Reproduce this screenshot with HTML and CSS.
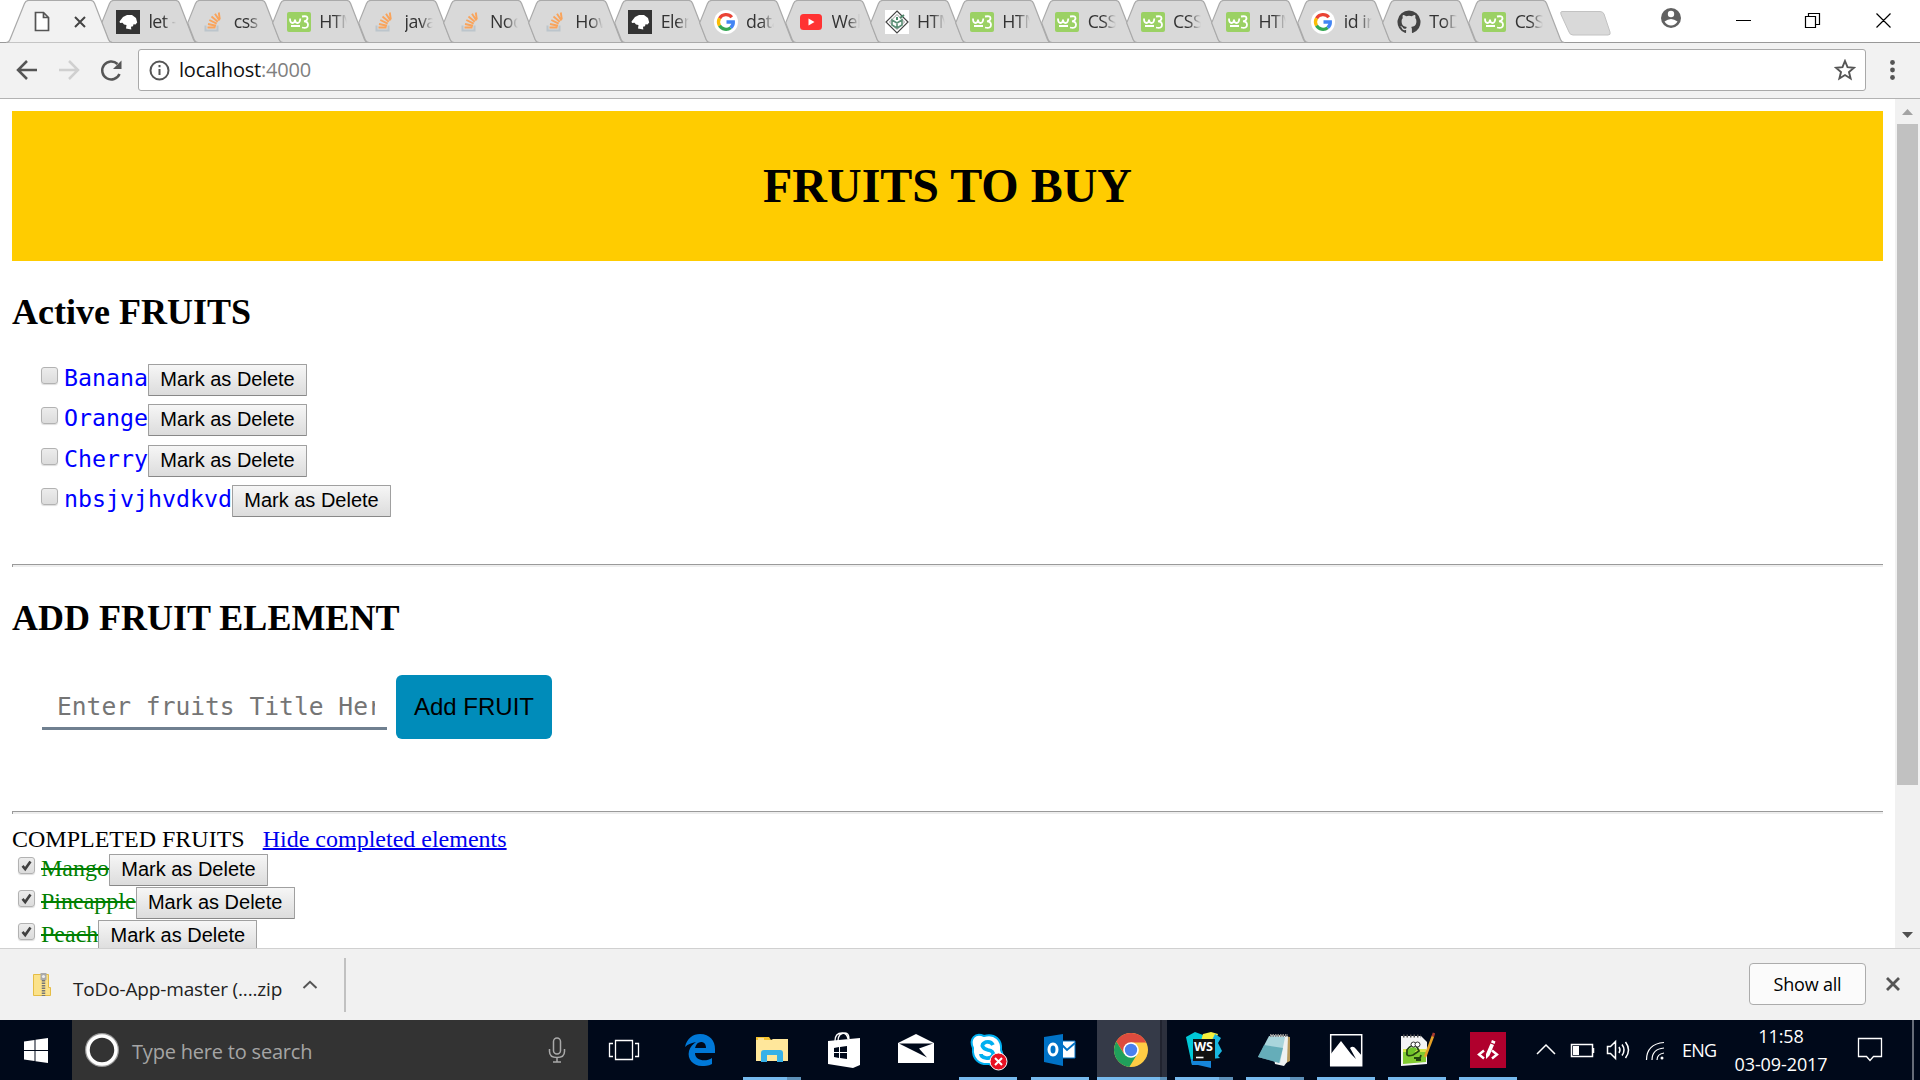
FILE: index.html
```html
<!DOCTYPE html>
<html lang="en">
<head>
<meta charset="utf-8">
<title>localhost:4000</title>
<link rel="stylesheet" href="styles.css">
</head>
<body>
<svg class="defs" width="0" height="0">
  <symbol id="shape-active" viewBox="0 0 116 43"><path d="M6 42.500Q9 42.500 10 39.500L24.500 3.500Q25.800 .5 28.500 .5H91Q93.500 .5 94.600 3.500L108.500 39.500Q109.600 42.500 112.500 42.500"/></symbol>
  <symbol id="shape" viewBox="0 0 116 43"><path d="M27.100 42.500Q24.200 42.500 23.100 39.500L16.700 22.900L24.500 3.500Q25.800 .5 28.500 .5H91Q93.500 .5 94.600 3.500L108.500 39.500Q109.600 42.500 112.500 42.500Z"/></symbol>
  <symbol id="lion" viewBox="0 0 24 24"><path fill="#333" d="M0 0h24v24H0z"/><path fill="#fff" d="M3.500 11.500l3.500-4.500 4-2h5l4 3 1.200 4.500-1.700 2-2-.3-.5 2-2 .6.3 2.700-5.300-1 .5-3.500-2.500-.5-1.500-1.800-2.500.3z"/></symbol>
  <symbol id="so" viewBox="0 0 24 24"><path d="M4.500 15.500v5h12v-5" fill="none" stroke="#bcc5cc" stroke-width="2"/><path d="M6.500 17.500h8M7 14l8 1.700M8.300 10l7.400 3.600M10.500 6.500l6.300 5.200M14 3.800l4.400 6.700M17.800 2.500l1 7" stroke="#f9a45c" stroke-width="1.900"/></symbol>
  <symbol id="w3" viewBox="0 0 24 24"><rect y="2" width="24" height="20" rx="2" fill="#9bd164"/><path d="M3 8.500q0 4.500 2.500 4.500t2.500-3.500q0 3.500 2.500 3.500t2.800-4.500M15 6.500q5.500-1 5.500 1.800 0 2.500-3.500 3 4 0 4 3.400 0 4.300-6 2.800M4 16h9" fill="none" stroke="#fff" stroke-width="1.800"/></symbol>
  <symbol id="google" viewBox="0 0 24 24"><circle cx="12" cy="12" r="12" fill="#fff"/><g fill="none" stroke-width="3.300"><path d="M17.800 7.300A7.600 7.600 0 0 0 5.500 8.300" stroke="#ea4335"/><path d="M5.500 8.300a7.600 7.600 0 0 0 0 7.400" stroke="#fbbc05"/><path d="M5.500 15.700a7.600 7.600 0 0 0 11.200 2" stroke="#34a853"/><path d="M16.700 17.700q2.800-2.500 2.600-5.700H12.500" stroke="#4285f4"/></g></symbol>
  <symbol id="yt" viewBox="0 0 24 24"><rect x="1" y="4" width="22" height="16" rx="3.500" fill="#f33"/><path fill="#fff" d="M9.500 8.500l6 3.500-6 3.500z"/></symbol>
  <symbol id="diamond" viewBox="0 0 24 24"><path fill="#fff" d="M0 0h24v24H0z"/><path d="M12 1l11 11-11 11L1 12z" fill="none" stroke="#444" stroke-width="1.200"/><path d="M12 4.500l7.500 7.500-7.500 7.500L4.500 12z" fill="none" stroke="#999" stroke-width="1"/><path d="M7 10l5 3 5-3v5l-5 3-5-3zM12 13v5" fill="none" stroke="#5d8f76" stroke-width="1.600"/><path d="M12 7v3M15 8l4-3" stroke="#4f8a6c" stroke-width="2"/></symbol>
  <symbol id="github" viewBox="0 0 24 24"><path fill="#444" d="M12 .5a11.500 11.500 0 0 0-3.700 22.400c.6.100.8-.2.800-.6v-2.200c-3.200.7-3.900-1.400-3.900-1.400-.5-1.300-1.300-1.700-1.300-1.700-1-.7.1-.7.100-.7 1.200.1 1.800 1.200 1.800 1.200 1 1.800 2.700 1.300 3.400 1 .1-.8.400-1.300.7-1.600-2.600-.3-5.300-1.300-5.300-5.700 0-1.300.5-2.300 1.200-3.100-.1-.3-.5-1.500.1-3.100 0 0 1-.3 3.200 1.200a11 11 0 0 1 5.800 0c2.200-1.500 3.200-1.200 3.200-1.200.6 1.600.2 2.800.1 3.100.8.800 1.200 1.800 1.200 3.100 0 4.400-2.700 5.400-5.300 5.700.4.400.8 1.100.8 2.200v3.200c0 .4.200.7.800.6A11.500 11.500 0 0 0 12 .5z"/></symbol>
</svg>

<header class="browser-top">
  <nav class="tabs">
    <div class="tab active"><svg class="shape"><use href="#shape-active"/></svg><svg class="page-icon" viewBox="0 0 16 21"><path d="M1.500 1.500h8l5 5v13h-13zM9.500 1.500v5h5"/></svg><svg class="tab-close" viewBox="0 0 12 12"><path d="M1 1l10 10M11 1L1 11"/></svg></div>
    <div class="tab"><svg class="shape"><use href="#shape"/></svg><svg class="fav"><use href="#lion"/></svg><span>let -</span></div>
    <div class="tab"><svg class="shape"><use href="#shape"/></svg><svg class="fav"><use href="#so"/></svg><span>css</span></div>
    <div class="tab"><svg class="shape"><use href="#shape"/></svg><svg class="fav"><use href="#w3"/></svg><span>HTML</span></div>
    <div class="tab"><svg class="shape"><use href="#shape"/></svg><svg class="fav"><use href="#so"/></svg><span>java</span></div>
    <div class="tab"><svg class="shape"><use href="#shape"/></svg><svg class="fav"><use href="#so"/></svg><span>Node</span></div>
    <div class="tab"><svg class="shape"><use href="#shape"/></svg><svg class="fav"><use href="#so"/></svg><span>How</span></div>
    <div class="tab"><svg class="shape"><use href="#shape"/></svg><svg class="fav"><use href="#lion"/></svg><span>Elem</span></div>
    <div class="tab"><svg class="shape"><use href="#shape"/></svg><svg class="fav"><use href="#google"/></svg><span>data</span></div>
    <div class="tab"><svg class="shape"><use href="#shape"/></svg><svg class="fav"><use href="#yt"/></svg><span>Web</span></div>
    <div class="tab"><svg class="shape"><use href="#shape"/></svg><svg class="fav"><use href="#diamond"/></svg><span>HTML</span></div>
    <div class="tab"><svg class="shape"><use href="#shape"/></svg><svg class="fav"><use href="#w3"/></svg><span>HTML</span></div>
    <div class="tab"><svg class="shape"><use href="#shape"/></svg><svg class="fav"><use href="#w3"/></svg><span>CSS</span></div>
    <div class="tab"><svg class="shape"><use href="#shape"/></svg><svg class="fav"><use href="#w3"/></svg><span>CSS</span></div>
    <div class="tab"><svg class="shape"><use href="#shape"/></svg><svg class="fav"><use href="#w3"/></svg><span>HTML</span></div>
    <div class="tab"><svg class="shape"><use href="#shape"/></svg><svg class="fav"><use href="#google"/></svg><span>id in</span></div>
    <div class="tab"><svg class="shape"><use href="#shape"/></svg><svg class="fav"><use href="#github"/></svg><span>ToDo</span></div>
    <div class="tab"><svg class="shape"><use href="#shape"/></svg><svg class="fav"><use href="#w3"/></svg><span>CSS</span></div>
    <svg class="window-tools" width="383" height="43" viewBox="1537 0 383 43">
      <path d="M1562 11.500h38q3 0 4 2.500l6 18q1 3-2 3h-35q-3 0-4-3l-8-17.500q-1-3 1-3z" fill="#d9d9d9" stroke="#c2c2c2"/>
      <circle cx="1671" cy="18" r="10" fill="#616161"/><circle cx="1671" cy="14" r="3.200" fill="#fff"/><path d="M1664.500 21.500q6.500-5 13 0-2.500 4-6.500 4t-6.500-4z" fill="#fff"/>
      <g fill="none" stroke="#000" stroke-width="1.200"><path d="M1736 20.500h15M1805.500 16.500h10v11h-10zM1808.500 16v-2.500h11v11h-3.500M1876.500 13.500l14 14M1890.500 13.500l-14 14"/></g>
    </svg>
  </nav>
  <div class="toolbar">
    <svg width="138" height="55" viewBox="0 43 138 55" fill="none" stroke-width="2.500">
      <path d="M37 70H19M27 61l-9 9 9 9" stroke="#555"/><path d="M59 70h18M69 61l9 9-9 9" stroke="#d0d0d0"/>
      <path d="M119.500 74A9 9 0 1 1 117.500 64" stroke="#555"/><path d="M121.500 60.500v8.500h-8.500z" fill="#555"/>
    </svg>
    <div class="address">
      <svg width="40" height="40" viewBox="0 0 40 40"><circle cx="20.500" cy="20.500" r="9" fill="none" stroke="#555" stroke-width="2"/><path d="M20.500 19v6M20.500 15v2.200" stroke="#555" stroke-width="2"/></svg>
      <span class="url">localhost<i>:4000</i></span>
      <svg class="star" width="22" height="22" viewBox="0 0 22 22"><path d="M11 2l2.500 6.200 6.500.5-5 4.300 1.600 6.500L11 16l-5.600 3.500L7 13 2 8.700l6.500-.5z" fill="none" stroke="#555" stroke-width="1.900"/></svg>
    </div>
    <svg width="54" height="55" viewBox="0 0 54 55" fill="#555"><circle cx="26.500" cy="19.500" r="2.400"/><circle cx="26.500" cy="27" r="2.400"/><circle cx="26.500" cy="34.500" r="2.400"/></svg>
  </div>
</header>

<main class="viewport">
  <div class="page">
    <div class="banner"><h1>FRUITS TO BUY</h1></div>
    <h2>Active FRUITS</h2>
    <ul class="active-list">
      <li><i class="box"></i><span>Banana</span><button>Mark as Delete</button></li>
      <li><i class="box"></i><span>Orange</span><button>Mark as Delete</button></li>
      <li><i class="box"></i><span>Cherry</span><button>Mark as Delete</button></li>
      <li><i class="box"></i><span>nbsjvjhvdkvd</span><button>Mark as Delete</button></li>
    </ul>
    <hr>
    <h2 class="add-title">ADD FRUIT ELEMENT</h2>
    <form class="add-form"><input type="text" placeholder="Enter fruits Title Here"><button type="button" class="add">Add FRUIT</button></form>
    <hr>
    <p class="completed">COMPLETED FRUITS <a href="#">Hide completed elements</a></p>
    <ul class="done-list">
      <li><i class="box"><svg viewBox="0 0 17 17"><path d="M4 9l3 3.500L13 4"/></svg></i><span>Mango</span><button>Mark as Delete</button></li>
      <li><i class="box"><svg viewBox="0 0 17 17"><path d="M4 9l3 3.500L13 4"/></svg></i><span>Pineapple</span><button>Mark as Delete</button></li>
      <li><i class="box"><svg viewBox="0 0 17 17"><path d="M4 9l3 3.500L13 4"/></svg></i><span>Peach</span><button>Mark as Delete</button></li>
    </ul>
  </div>
  <div class="scrollbar">
    <svg width="25" height="25" viewBox="0 0 25 25"><path d="M7 16l5.500-6 5.500 6z" fill="#a3a3a3"/></svg>
    <div class="thumb"></div>
    <svg width="25" height="25" viewBox="0 0 25 25"><path d="M7 9l5.500 6L18 9z" fill="#505050"/></svg>
  </div>
</main>

<section class="downloads">
  <svg width="19" height="24" viewBox="0 0 19 24"><path d="M.5 1.500h15v13l2 0v8H.5z" fill="#fbe28a" stroke="#e5bd45"/><path d="M7.500 0h6v7h-6z" fill="#aaa"/><circle cx="10.500" cy="3.500" r="1.600" fill="#eee"/><path d="M10.500 7v16" stroke="#777" stroke-width="3.500" stroke-dasharray="1.500 1"/></svg>
  <span class="file">ToDo-App-master (....zip</span>
  <svg width="16" height="10" viewBox="0 0 16 10"><path d="M1.500 8L8 1.800 14.500 8" fill="none" stroke="#555" stroke-width="2"/></svg>
  <i class="rule"></i>
  <button class="show-all">Show all</button>
  <svg width="16" height="16" viewBox="0 0 16 16"><path d="M2 1l12 12M14 1L2 13" stroke="#555" stroke-width="2.800"/></svg>
</section>

<footer class="taskbar">
  <div class="start"><svg width="24" height="25" viewBox="0 0 24 25" fill="#fff"><path d="M0 3.500l10.500-1.500v10H0zM11.500 1.800L24 0v12H11.500zM0 13h10.500v10L0 21.500zM11.500 13H24v12l-12.500-1.800z"/></svg></div>
  <div class="search">
    <svg width="36" height="36" viewBox="0 0 36 36" fill="none"><circle cx="18" cy="18" r="15.500" stroke="#999" stroke-width="3"/><circle cx="18" cy="18" r="14" stroke="#fff" stroke-width="3.500"/></svg>
    <span>Type here to search</span>
    <svg class="mic" width="18" height="26" viewBox="0 0 18 26" fill="none" stroke="#aaa" stroke-width="1.500"><rect x="5.500" y="1" width="7" height="16" rx="3.500"/><path d="M1.500 12v2.500q0 6 7.500 6t7.500-6V12M9 20.500V25M5 25h8"/></svg>
  </div>
  <div class="apps">
    <div class="app taskview"><svg viewBox="0 0 36 36" fill="none" stroke="#fff" stroke-width="1.300"><path d="M9.500 8.500h17v19h-17zM7 11.500H3.500v13H7M29 11.500h3.500v13H29"/></svg></div>
    <div class="app"><svg viewBox="0 0 36 36"><path fill="#0078d7" d="M3 15C5 6 11 2 18 2c10 0 15 7 15 15v4H13c0 8 11 9 17 5v6c-4 2-7 2-10 2C11 34 5 27 7 19c1-4 4-7 7-9-4 1-8 2-11 5zm10 1h11c0-4-2-6-5-6s-5 2-6 6z"/></svg></div>
    <div class="app open multi"><svg viewBox="0 0 36 36"><path fill="#f5c330" d="M2 5h13l2 3H2z"/><path fill="#ffe79b" d="M2 8h15l2-1h15v22H2z"/><path d="M7 30V21q0-3 3-3h16q3 0 3 3v9h-6v-7H13v7z" fill="#37b1e8"/><path d="M4 7h6" stroke="#fff"/></svg></div>
    <div class="app"><svg viewBox="0 0 36 36"><path d="M9 9q0-8 7-8 5 0 6 6M12 9q0-8 7-8 4 0 4 6" stroke="#fff" fill="none" stroke-width="1.300"/><path fill="#fff" d="M2 9l32-3v27l-7 3-25-4z"/><path fill="#00091a" d="M8 16l5-1v5H8zM14 15l7-1v6h-7zM8 21h5v5l-5-1zM14 21h7v6l-7-1z"/></svg></div>
    <div class="app"><svg viewBox="0 0 36 36"><path fill="#fff" d="M0 11l18-9 18 9v20H0z"/><path fill="#00091a" d="M1 11.500h34l-14 5 8 9z"/></svg></div>
    <div class="app open"><svg viewBox="0 0 36 36" overflow="visible"><g fill="#fff" stroke="#00aff0" stroke-width="2"><path d="M3 16C-1 7 5 0 14 4 25 1 32 8 31 18c5 10-3 18-12 14C9 33 2 27 3 16z"/></g><path d="M23 13q-2-4-7-3-5 2-3 5 1 2 5 3 6 1 5 5-2 4-7 3-5-1-5-4" fill="none" stroke="#00aff0" stroke-width="3.800"/><circle cx="28.500" cy="29.500" r="8.500" fill="#e81123" stroke="#fff"/><path d="M25 26l7 7M32 26l-7 7" stroke="#fff" stroke-width="2"/></svg></div>
    <div class="app open"><svg viewBox="0 0 36 36"><path d="M15 9h18v17H15z" fill="#fff" stroke="#0072c6"/><path d="M19 12l6 6 8-7" fill="none" stroke="#0072c6" stroke-width="2"/><path fill="#0072c6" d="M2 5l19-3v32L2 30z"/><ellipse cx="11" cy="17.500" rx="4" ry="5.500" fill="none" stroke="#fff" stroke-width="3"/></svg></div>
    <div class="app open multi current"><svg viewBox="0 0 36 36"><circle cx="18" cy="18" r="17" fill="#fc4"/><path fill="#dd4b3e" d="M3.300 9.500a17 17 0 0 1 30 1H18l-7 11z"/><path fill="#20a05b" d="M3.300 9.500a17 17 0 0 0 13 25.500l8-13-8 3-5.500-3.500z"/><circle cx="18" cy="18" r="7.800" fill="#fff"/><circle cx="18" cy="18" r="6.200" fill="#4a80ee"/></svg></div>
    <div class="app open multi"><svg viewBox="0 0 36 36"><path fill="#00c8d7" d="M0 5L9 0l8 3 4 4-10 25-5 1z"/><path fill="#f5ef3d" d="M17 2l8-2 7 2-4 10-13-3z"/><path fill="#19b7df" d="M29 2l6 4-3 5 4 8-4 5 2 2-8 1V8z"/><path fill="#1685d9" d="M5 27h20v9l-13-3H6z"/><path fill="#111" d="M7 7h22v22H7z"/><path d="M10 25.500h7.500" stroke="#fff" stroke-width="1.600"/><text x="8" y="19" class="ws" textLength="19" lengthAdjust="spacingAndGlyphs">WS</text></svg></div>
    <div class="app narrow open multi"><svg viewBox="0 0 36 36"><path d="M22 3l11 2v24l-6 3z" fill="#b89a5c"/><path d="M13 3l18 1-1 26-3 4-9-2z" fill="#eef1f1"/><path fill="#a9d5dc" d="M12 4l16 1-5 26L1 25z"/><path fill="#4f9fae" d="M7 13l19 3-4 15L1 25z" opacity=".75"/><path d="M13 3.500h18" stroke="#888" stroke-width="3" stroke-dasharray="1.500 1"/></svg></div>
    <div class="app narrow open"><svg viewBox="0 0 36 36"><path fill="none" stroke="#fff" stroke-width="1.500" d="M2.700 2.700h31v31h-31z"/><path fill="#fff" d="M2 23L13 9l10 13 5 5-6-11q3-3 6 1l6 7v10H2z"/></svg></div>
    <div class="app narrow open"><svg viewBox="0 0 36 36"><path fill="#f4f4f4" d="M2 4h20l6 6v22L2 34z"/><path fill="#82cc32" d="M4 19h23v11L4 32z"/><path fill="#d8e84a" d="M4 17h23v3H4z"/><path d="M4 4h18" stroke="#555" stroke-width="3" stroke-dasharray="1.500 2"/><path d="M8 18q5-7 10-3l2 4-6 4q-7 2-6-2zM15 26h6l1-3M17 28h5" fill="none" stroke="#234710" stroke-width="1.800"/><path d="M9 18q4-5 8-2l1 2-5 4q-5 1-4-2z" fill="#6fc52b"/><circle cx="14.500" cy="12.500" r="2.500" fill="#fff" stroke="#333"/><circle cx="18.500" cy="12.500" r="2.500" fill="#fff" stroke="#333"/><path d="M34 4L26 25" stroke="#e5a126" stroke-width="2.600"/><path d="M35 1l-1.200 3.500" stroke="#a63a30" stroke-width="2.600"/></svg></div>
    <div class="app narrow open"><svg viewBox="0 0 36 36"><path fill="#b0002d" d="M0 0h36v36H0z"/><path d="M14 18.500l-5 4 5 4M22 18.500l5 4-5 4" fill="none" stroke="#fff" stroke-width="2.400"/><path fill="#fff" d="M22 8l3.500 1.500-1 2.500-3.500-1.500zM20.500 11.500l3.500 1.500-4.500 10.500-3.500 3.500 0-5z"/></svg></div>
  </div>
  <svg class="tray" width="160" height="60" viewBox="1520 1020 160 60" fill="none" stroke="#fff" stroke-width="1.500"><path d="M1537 1054l9-9 9 9"/><path d="M1571.500 1044.500h21v12h-21zM1593.500 1048v5"/><path d="M1573 1046h6v9h-6z" fill="#fff" stroke="none"/><path d="M1607.500 1046.500h3l5-5v17l-5-5h-3zM1619 1047q2 3 0 6M1622 1044.500q4 5.500 0 11M1625.500 1042q6 8 0 16"/><path d="M1646.500 1060q0-16 17.500-17.500M1652 1060q0-11 12-12M1657 1060q0-6 7-7" stroke-width="1.200"/><circle cx="1662" cy="1058" r="1.500" fill="#fff" stroke="none"/></svg>
  <span class="lang">ENG</span>
  <div class="clock"><span>11:58</span><span>03-09-2017</span></div>
  <svg class="notice" width="26" height="26" viewBox="0 0 26 26"><path d="M1.500 1.500h23v18h-8l-3.500 4-3.500-4h-8z" fill="none" stroke="#fff" stroke-width="1.300"/></svg>
  <i class="peek"></i>
</footer>
</body>
</html>
```
FILE: styles.css
```css
* { box-sizing: border-box; }
body { margin: 0; width: 1920px; height: 1080px; overflow: hidden; display: flex; flex-direction: column; background: #fff; }
svg { display: block; flex: none; }
.defs { position: absolute; }
ul { list-style: none; margin: 0; padding: 0; }

.browser-top { height: 99px; flex: none; background: #f2f2f2; border-bottom: 1px solid #b3b3b3; font-family: "Open Sans", "Noto Sans", sans-serif; }
.tabs { height: 43px; display: flex; background: #fff; box-shadow: inset 0 -1px #999; isolation: isolate; }
.tab { flex: none; width: 85.4px; height: 43px; display: grid; grid-template-columns: 30.6px 24px 8.400px 28px; align-items: center; }
.tab > * { grid-row: 1; }
.tab .shape { grid-column: 1; width: 116px; height: 43px; fill: #d9d9d9; stroke: #aaa; stroke-width: 1.2; }
.tab.active { position: relative; z-index: 2; }
.tab.active .shape { fill: #f2f2f2; }
.fav { grid-column: 2; width: 24px; height: 24px; }
.tab span { grid-column: 4; width: 28px; overflow: hidden; white-space: nowrap; font-size: 17.800px; line-height: 24px; padding-bottom: 2px; color: #333; letter-spacing: -.5px; -webkit-mask-image: linear-gradient(90deg, #000 55%, transparent); mask-image: linear-gradient(90deg, #000 55%, transparent); }
.page-icon { grid-column: 1; width: 16px; height: 21px; margin-left: 34px; fill: #fff; stroke: #555; stroke-width: 1.7; }
.tab-close { grid-column: 3; width: 12px; height: 12px; margin-left: 19px; stroke: #444; stroke-width: 2; }
.window-tools { margin-left: auto; }
.toolbar { display: flex; height: 55px; }
.address { flex: 1; height: 42px; margin-top: 6px; background: #fff; border: 1px solid #a9a9a9; border-radius: 3px; display: flex; align-items: center; }
.url { font-size: 20px; line-height: 40px; letter-spacing: -.2px; flex: 1; color: #111; }
.url i { font-style: normal; color: #808080; }
.star { margin-right: 9px; }

.viewport { flex: none; height: 849px; display: flex; overflow: hidden; font-family: "Liberation Serif", serif; color: #000; }
.page { flex: 1; padding: 12px 12px 0; font-size: 24px; }
.banner { height: 150px; background: #fc0; display: flex; align-items: center; justify-content: center; }
h1 { margin: 0; font-size: 48px; line-height: 56px; }
h2 { margin: 30px 0 0; font-size: 36px; line-height: 42px; height: 42px; }
.page li { display: flex; align-items: flex-start; }
.page button { flex: none; width: 159px; height: 32px; padding: 0 0 2px; font: 20px/26px "Liberation Sans", Arial, sans-serif; color: #000; border: 1px solid #a0a0a0; border-bottom-color: #888; border-radius: 1px; background: linear-gradient(#f6f6f6, #dcdcdc); white-space: nowrap; }
.box { width: 17px; height: 17px; flex: none; border: 1.500px solid #b2b2b2; border-radius: 3px; background: linear-gradient(#ececec, #dcdcdc); box-shadow: 0 1px 1px #ddd; }
.box svg { width: 15px; height: 15px; fill: none; stroke: #404040; stroke-width: 3; }
.active-list { padding: 31px 0 0 29px; height: 231px; }
.active-list li { height: 40.400px; }
.active-list .box { margin: 3px 6px 0 0; }
.active-list span { font: 23.250px/28px "DejaVu Sans Mono", monospace; color: #00f; }
hr { height: 3px; margin: 0; border: 0; border-top: 1px solid #9a9a9a; border-left: 1px solid #9a9a9a; background: #eee; }
.add-title { margin-top: 30px; }
.add-form { height: 172px; padding: 36px 0 0 30px; display: flex; align-items: flex-start; }
.add-form input { width: 345px; height: 43px; margin: 12px 9px 0 0; padding: 0 12px 2px 15px; border: 0; border-bottom: 3px solid #708090; background: transparent; font: 24.600px "DejaVu Sans Mono", monospace; outline: 0; }
.add-form input::placeholder { color: #757575; opacity: 1; }
.page .add { width: 156px; height: 64px; padding: 0; border: 0; border-radius: 6px; background: #008cba; font-size: 24px; }
.completed { margin: 0; padding-top: 12px; height: 40px; line-height: 27px; }
.completed a { color: #00e; margin-left: 12px; text-decoration-thickness: 2px; }
.done-list { padding-left: 6px; }
.done-list li { height: 33px; }
.done-list .box { margin: 3px 6px 0 0; }
.done-list span { color: green; line-height: 28px; text-decoration: line-through; text-decoration-thickness: 2px; }
.scrollbar { width: 25px; background: #f1f1f1; display: flex; flex-direction: column; }
.thumb { height: 661px; margin: 0 2px auto; background: #c1c1c1; }

.downloads { flex: none; height: 72px; background: #f1f1f1; border-top: 1px solid #d0d0d0; padding: 0 19px 0 33px; display: flex; align-items: center; font-family: "Open Sans", "Noto Sans", sans-serif; }
.file { font-size: 19px; letter-spacing: -.15px; width: 212px; margin: 8px 17px 0 21px; white-space: nowrap; color: #222; }
.rule { width: 2px; height: 54px; background: #c1c1c1; margin-left: 26px; }
.show-all { margin-left: auto; margin-right: 19px; margin-bottom: 1px; width: 117px; height: 42px; border: 1px solid #acacac; border-radius: 4px; background: #fbfbfb; font: 18px "Open Sans", sans-serif; letter-spacing: -.2px; padding: 0 0 1px; color: #000; }

.taskbar { flex: none; height: 60px; background: #00091a; color: #fff; display: flex; align-items: center; font-family: "Open Sans", "Noto Sans", sans-serif; }
.start { width: 72px; display: flex; justify-content: center; }
.search { width: 516px; height: 60px; background: #333; display: flex; align-items: center; padding: 0 22px 0 12px; color: #a5a5a5; font-size: 20px; letter-spacing: -.2px; }
.search span { margin: 2px 0 0 12px; }
.mic { margin-left: auto; }
.apps { display: flex; height: 60px; }
.app { width: 72px; display: flex; align-items: center; justify-content: center; position: relative; }
.app svg { width: 36px; height: 36px; }
.app.taskview { width: 76px; }
.taskview svg { margin-right: 4px; }
.app.narrow { width: 71px; }
.narrow svg, .current svg { margin-right: 2px; }
.open::after { content: ""; position: absolute; bottom: 0; left: 7px; width: 58px; height: 3px; background: #76b9ed; }
.narrow::after { left: 6px; }
.multi::after { background: linear-gradient(90deg, #76b9ed 44px, #5d90b8 44px); }
.current { background: linear-gradient(90deg, transparent 1px, #353a48 1px 64px, #20232f 64px 66px, #2c303d 66px 71px, transparent 71px); }
.current::after { left: 1px; width: 70px; background: linear-gradient(90deg, #76b9ed 63px, #5d90b8 63px); }
.ws { font: bold 12px "Open Sans", sans-serif; fill: #fff; }
.tray { margin-left: -4px; }
.lang { width: 42px; margin-left: 2px; font-size: 18px; letter-spacing: -.8px; }
.clock { width: 114px; display: flex; flex-direction: column; align-items: center; font-size: 18px; line-height: 28px; letter-spacing: -.1px; }
.notice { margin-left: 19px; }
.peek { width: 2px; height: 60px; background: #666c78; margin-left: auto; margin-right: 6px; }
```
